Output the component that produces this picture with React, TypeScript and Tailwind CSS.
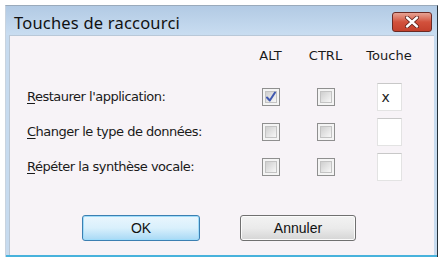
import React from 'react';

interface Row {
  key: string;
  rest: string;
  alt: boolean;
  ctrl: boolean;
  value: string;
}

const rows: Row[] = [
  { key: 'R', rest: "estaurer l'application:", alt: true, ctrl: false, value: 'x' },
  { key: 'C', rest: 'hanger le type de données:', alt: false, ctrl: false, value: '' },
  { key: 'R', rest: 'épéter la synthèse vocale:', alt: false, ctrl: false, value: '' },
];

const CheckBox: React.FC<{ checked: boolean }> = ({ checked }) => (
  <div className="w-[18px] h-[18px] border border-[#8f8f8f] bg-[#f4f4f4] p-[2px]">
    <div className="relative w-full h-full border border-[#c3c3c3] bg-gradient-to-br from-[#cfcfcf] to-[#f7f7f7]">
      {checked && (
        <svg className="absolute -left-[1px] -top-[1px]" width="12" height="12" viewBox="0 0 12 12">
          <path d="M2 6.5 L4.8 9.5 L10 1.5" fill="none" stroke="#4058b0" strokeWidth="2" strokeLinecap="round" strokeLinejoin="round" />
        </svg>
      )}
    </div>
  </div>
);

const KeyBox: React.FC<{ value: string }> = ({ value }) => (
  <div className="w-[25px] h-[28px] bg-white border border-[#e3e3e3] border-t-[#c8c8c8] flex items-center pl-[4px] text-[14px] text-[#222]">
    {value}
  </div>
);

export default function App() {
  return (
    <div className="w-[440px] h-[257px] bg-white pt-[5px] pl-[5px]" style={{ fontFamily: '"DejaVu Sans", sans-serif' }}>
      <div className="w-[433px] h-[252px] flex flex-col border-r border-r-[#26313a] border-t border-t-[#9aaabb] border-l border-l-[#c9d3de] bg-[#c7dbef]">
        {/* title bar */}
        <div className="h-[29px] flex items-center justify-between pl-[8px] pr-[5px] bg-gradient-to-b from-[#b2cae4] to-[#c9ddf1]">
          <span className="text-[16.5px] mt-[5px] text-[#111] tracking-[0.2px]" style={{ fontFamily: '"Noto Sans", sans-serif' }}>
            Touches de raccourci
          </span>
          <div className="w-[40px] h-[20px] mt-[3px] rounded-[3px] border border-[#6b2a24] bg-gradient-to-b from-[#e6a294] via-[#d2513c] to-[#c4402c] flex items-center justify-center">
            <svg width="16" height="12" viewBox="0 0 16 12">
              <path d="M3 1.5 L13 10.5 M13 1.5 L3 10.5" stroke="#5a1e18" strokeWidth="4" strokeLinecap="round" />
              <path d="M3 1.5 L13 10.5 M13 1.5 L3 10.5" stroke="#ffffff" strokeWidth="2.4" strokeLinecap="round" />
            </svg>
          </div>
        </div>
        {/* body */}
        <div className="flex-1 flex flex-col mx-[3px] border-l border-l-[#b9c6d3] border-t border-t-[#b9c8d8] bg-[#f7f3f7] text-[13px] text-[#1a1a1a]">
          <div className="grid grid-cols-[216px_55px_55px_72px] pl-[17px] pt-[10px]">
            <div className="h-[20px]" />
            <div className="h-[20px] flex items-center justify-center">ALT</div>
            <div className="h-[20px] flex items-center justify-center">CTRL</div>
            <div className="h-[20px] flex items-center justify-center">Touche</div>
          </div>
          <div className="grid grid-cols-[216px_55px_55px_72px] gap-y-[7px] pl-[17px] mt-[17px]">
            {rows.map((r, i) => (
              <React.Fragment key={i}>
                <div className="h-[28px] flex items-center tracking-[-0.5px]">
                  <span>
                    <span className="underline underline-offset-2">{r.key}</span>
                    {r.rest}
                  </span>
                </div>
                <div className="h-[28px] flex items-center justify-center">
                  <CheckBox checked={r.alt} />
                </div>
                <div className="h-[28px] flex items-center justify-center">
                  <CheckBox checked={r.ctrl} />
                </div>
                <div className="h-[28px] flex items-center justify-center">
                  <KeyBox value={r.value} />
                </div>
              </React.Fragment>
            ))}
          </div>
          <div className="flex gap-[40px] pl-[72px] mt-[34px] text-[14px]" style={{ fontFamily: '"Liberation Sans", sans-serif' }}>
            <button className="w-[118px] h-[26px] rounded-[3px] border border-[#3c7fb1] bg-gradient-to-b from-[#eaf6fd] via-[#d9f0fc] to-[#a7d9f5] shadow-[inset_0_0_0_1px_#9fdcfa] text-[#111]">
              OK
            </button>
            <button className="w-[116px] h-[26px] rounded-[3px] border border-[#707070] bg-gradient-to-b from-[#f2f2f2] via-[#ebebeb] to-[#d5d5d5] shadow-[inset_0_0_0_1px_#fbfbfb] text-[#111]">
              Annuler
            </button>
          </div>
        </div>
        <div className="h-[2px] bg-[#48b2dc]" />
      </div>
    </div>
  );
}
